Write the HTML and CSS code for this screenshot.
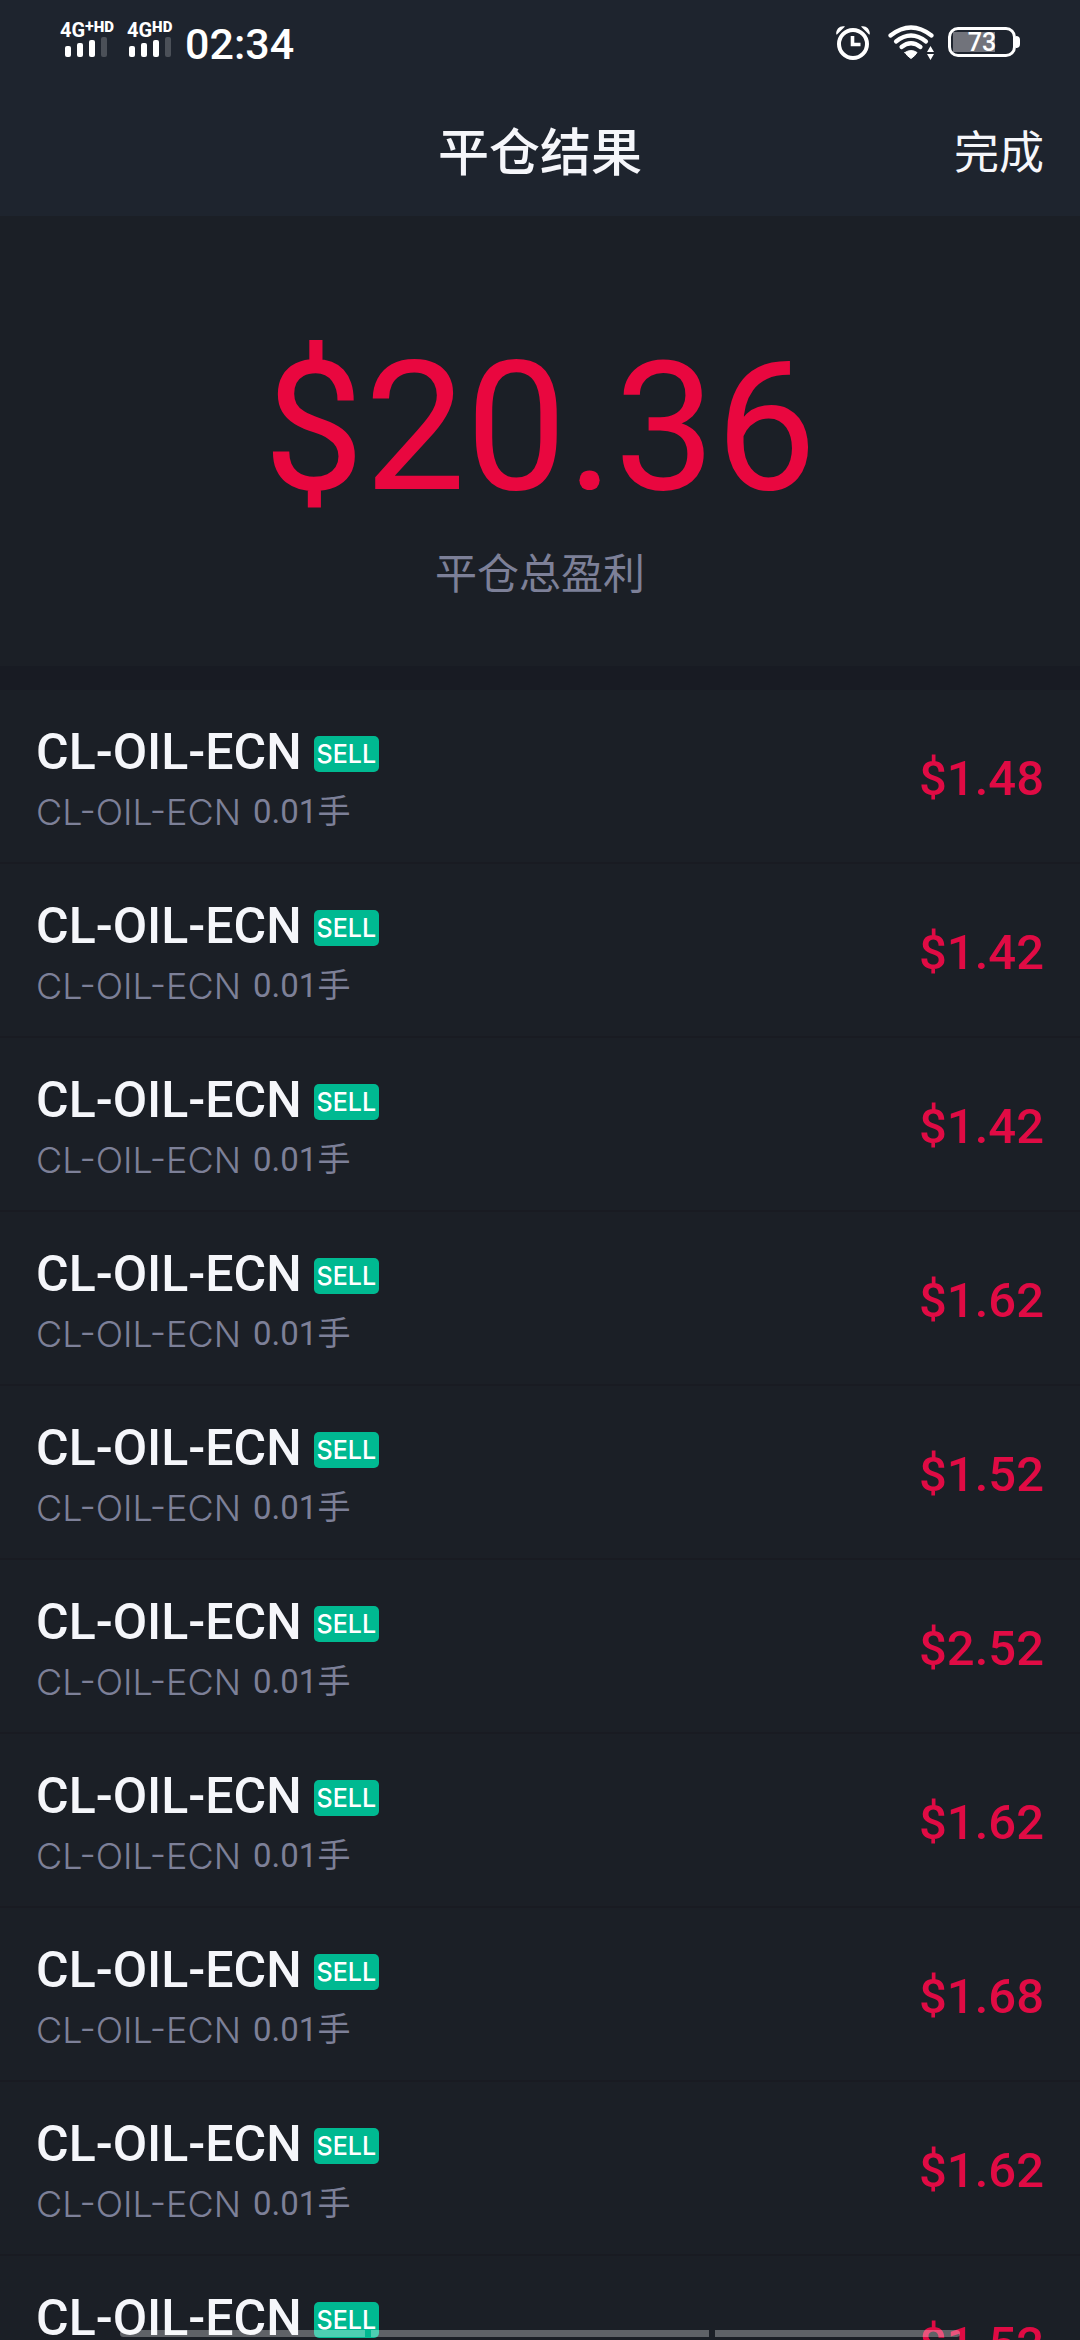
FILE: index.html
```html
<!DOCTYPE html>
<html lang="zh-CN">
<head>
<meta charset="utf-8">
<meta name="viewport" content="width=device-width, initial-scale=1">
<title>平仓结果</title>
<link rel="stylesheet" href="styles.css">
</head>
<body>
<div class="app">
  <div class="status">
    <div class="status-side">
      <div class="signal">
        <div class="net">4G<span class="plus">+</span><span class="hd">HD</span></div>
        <svg class="bars" width="44" height="20" viewBox="0 0 44 20"><g fill="#fff"><rect x="0" y="9" width="6" height="11" rx="2"/><rect x="12" y="6" width="6" height="14" rx="2"/><rect x="24" y="3" width="6" height="17" rx="2"/></g><rect x="36" y="0" width="6" height="20" rx="2" fill="#4b5058"/></svg>
      </div>
      <div class="signal second">
        <div class="net">4G<span class="hd">HD</span></div>
        <svg class="bars" width="44" height="20" viewBox="0 0 44 20"><g fill="#fff"><rect x="0" y="9" width="6" height="11" rx="2"/><rect x="12" y="6" width="6" height="14" rx="2"/><rect x="24" y="3" width="6" height="17" rx="2"/></g><rect x="36" y="0" width="6" height="20" rx="2" fill="#4b5058"/></svg>
      </div>
      <time class="clock">02:34</time>
    </div>
    <div class="status-side icons">
      <svg width="36" height="36" viewBox="0 0 36 36" fill="none" stroke="#fff"><circle cx="17" cy="19" r="14" stroke-width="4"/><path d="M16.500 11v8.500h8" stroke-width="3.600"/><path d="M0.300 9.500C-0.500 4.500 4 0 9 1.500L1 9.500zM33.700 9.500C34.500 4.500 30 0 25 1.500L33 9.500z" fill="#fff" stroke="none"/></svg>
      <svg width="48" height="36" viewBox="0 0 48 36" fill="none" stroke="#fff" stroke-width="4.200" stroke-linecap="round"><path d="M4.500 10.500Q25 -5.500 45.500 10.500"/><path d="M10 16.500Q25 4.500 40 16.500"/><path d="M15.500 22Q25 14.500 34.500 22"/><path d="M19 27.500Q25 23.500 31 27.500Q29 31 25 33.500Q21 31 19 27.500z" fill="#fff" stroke-width="1"/><path d="M44.500 21l3.500 6h-7zM44.500 35l3.500-6h-7z" fill="#fff" stroke="none"/></svg>
      <div class="battery"><div class="cell"><span class="level">73</span></div><i class="tip"></i></div>
    </div>
  </div>
  <header class="bar">
    <h1 class="title">平仓结果</h1>
    <button class="done" type="button">完成</button>
  </header>
  <section class="summary">
    <div class="total">$20.36</div>
    <div class="label">平仓总盈利</div>
  </section>
  <ul class="list">
    <li class="row"><div class="info"><div class="head"><span class="name">CL-OIL-ECN</span><span class="side">SELL</span></div><div class="sub"><span>CL-OIL-ECN</span><span class="lots">0.01手</span></div></div><span class="profit">$1.48</span></li>
    <li class="row"><div class="info"><div class="head"><span class="name">CL-OIL-ECN</span><span class="side">SELL</span></div><div class="sub"><span>CL-OIL-ECN</span><span class="lots">0.01手</span></div></div><span class="profit">$1.42</span></li>
    <li class="row"><div class="info"><div class="head"><span class="name">CL-OIL-ECN</span><span class="side">SELL</span></div><div class="sub"><span>CL-OIL-ECN</span><span class="lots">0.01手</span></div></div><span class="profit">$1.42</span></li>
    <li class="row"><div class="info"><div class="head"><span class="name">CL-OIL-ECN</span><span class="side">SELL</span></div><div class="sub"><span>CL-OIL-ECN</span><span class="lots">0.01手</span></div></div><span class="profit">$1.62</span></li>
    <li class="row"><div class="info"><div class="head"><span class="name">CL-OIL-ECN</span><span class="side">SELL</span></div><div class="sub"><span>CL-OIL-ECN</span><span class="lots">0.01手</span></div></div><span class="profit">$1.52</span></li>
    <li class="row"><div class="info"><div class="head"><span class="name">CL-OIL-ECN</span><span class="side">SELL</span></div><div class="sub"><span>CL-OIL-ECN</span><span class="lots">0.01手</span></div></div><span class="profit">$2.52</span></li>
    <li class="row"><div class="info"><div class="head"><span class="name">CL-OIL-ECN</span><span class="side">SELL</span></div><div class="sub"><span>CL-OIL-ECN</span><span class="lots">0.01手</span></div></div><span class="profit">$1.62</span></li>
    <li class="row"><div class="info"><div class="head"><span class="name">CL-OIL-ECN</span><span class="side">SELL</span></div><div class="sub"><span>CL-OIL-ECN</span><span class="lots">0.01手</span></div></div><span class="profit">$1.68</span></li>
    <li class="row"><div class="info"><div class="head"><span class="name">CL-OIL-ECN</span><span class="side">SELL</span></div><div class="sub"><span>CL-OIL-ECN</span><span class="lots">0.01手</span></div></div><span class="profit">$1.62</span></li>
    <li class="row"><div class="info"><div class="head"><span class="name">CL-OIL-ECN</span><span class="side">SELL</span></div><div class="sub"><span>CL-OIL-ECN</span><span class="lots">0.01手</span></div></div><span class="profit">$1.52</span></li>
  </ul>
  <div class="gesture"><i></i><i></i><i></i></div>
</div>
</body>
</html>
```

FILE: styles.css
```css
* { box-sizing: border-box; }

body {
  margin: 0;
  background: #1b1f26;
  color: #f5f6fa;
  font-family: Roboto, "Noto Sans CJK SC", sans-serif;
}

.app {
  display: flex;
  flex-direction: column;
  height: 100vh;
  overflow: hidden;
}

/* system status bar */
.status {
  flex: none;
  display: flex;
  justify-content: space-between;
  height: 86px;
  padding: 20px 60px 0;
  background: #1e242e;
  color: #fff;
}

.status-side { display: flex; }

.signal { width: 67px; }
.signal.second { width: 58px; }

.net {
  display: flex;
  height: 17px;
  font-size: 20px;
  font-weight: 700;
  line-height: 20px;
}

.plus { font-size: 16px; line-height: 14px; }
.hd { font-size: 15px; font-weight: 900; line-height: 14px; }

.bars { display: block; margin-left: 5px; }
.second .bars { margin-left: 2px; }

.clock {
  font-size: 43px;
  font-weight: 500;
  line-height: 48px;
}

.icons {
  gap: 14px;
  padding-top: 5px;
}

.battery {
  display: flex;
  align-items: center;
  height: 34px;
}

.cell {
  width: 68px;
  height: 30px;
  padding: 2px;
  border: 3px solid #fff;
  border-radius: 10px;
  background: linear-gradient(#71737b, #71737b) 2px 2px / 42px 20px no-repeat;
  text-align: center;
}

.level {
  display: block;
  font-size: 25px;
  font-weight: 500;
  line-height: 22px;
}

.tip {
  width: 4px;
  height: 12px;
  border-radius: 0 4px 4px 0;
  background: #fff;
}

/* page header */
.bar {
  flex: none;
  display: grid;
  grid-template-columns: 1fr auto 1fr;
  align-items: center;
  height: 130px;
  padding: 6px 36px 0;
  background: #1e242e;
}

.title {
  grid-column: 2;
  margin: 0;
  font-size: 51px;
  font-weight: 500;
  line-height: 60px;
}

.done {
  justify-self: end;
  padding: 0;
  border: 0;
  background: none;
  color: inherit;
  font: inherit;
  font-size: 45px;
  line-height: 60px;
}

/* total profit */
.summary {
  flex: none;
  padding: 108px 36px 60px;
  border-bottom: 24px solid #181b23;
  text-align: center;
}

.total {
  color: #e9073f;
  font-size: 180px;
  line-height: 208px;
}

.label {
  padding-top: 12px;
  color: #7d8098;
  font-size: 42px;
  line-height: 62px;
}

/* closed positions */
.list {
  flex: 1;
  min-height: 0;
  margin: 0;
  padding: 0;
  overflow: hidden auto;
  list-style: none;
  scrollbar-width: none;
}

.row {
  display: flex;
  align-items: center;
  justify-content: space-between;
  height: 174px;
  padding: 6px 36px 0;
  border-bottom: 2px solid #191b22;
}

.info { padding-top: 6px; }

.head {
  display: flex;
  align-items: center;
  gap: 12px;
}

.name {
  font-size: 50px;
  font-weight: 500;
  line-height: 60px;
}

.side {
  height: 36px;
  margin-top: 4px;
  padding: 0 3px;
  border-radius: 5px;
  background: #00b991;
  color: #fff;
  font-family: Inter, sans-serif;
  font-size: 25px;
  font-weight: 500;
  line-height: 37px;
}

.sub {
  display: flex;
  gap: 12px;
  color: #7d8098;
  font-family: Inter, sans-serif;
  font-size: 36px;
  font-weight: 300;
  line-height: 60px;
}

.lots {
  font-family: Roboto, "Noto Sans CJK SC", sans-serif;
  font-size: 33px;
  font-weight: 400;
}

.profit {
  color: #e00b44;
  font-size: 49px;
  font-weight: 500;
  line-height: 60px;
}

/* gesture hints over the bottom edge */
.gesture {
  position: fixed;
  right: 120px;
  bottom: 3px;
  left: 120px;
  display: grid;
  grid-template-columns: 245px 1fr 245px;
  gap: 6px;
  height: 7px;
}

.gesture i { background: rgba(255, 255, 255, 0.3); }
.gesture i:first-child { border-radius: 4px 0 0 4px; }
.gesture i:last-child { border-radius: 0 4px 4px 0; }
```
